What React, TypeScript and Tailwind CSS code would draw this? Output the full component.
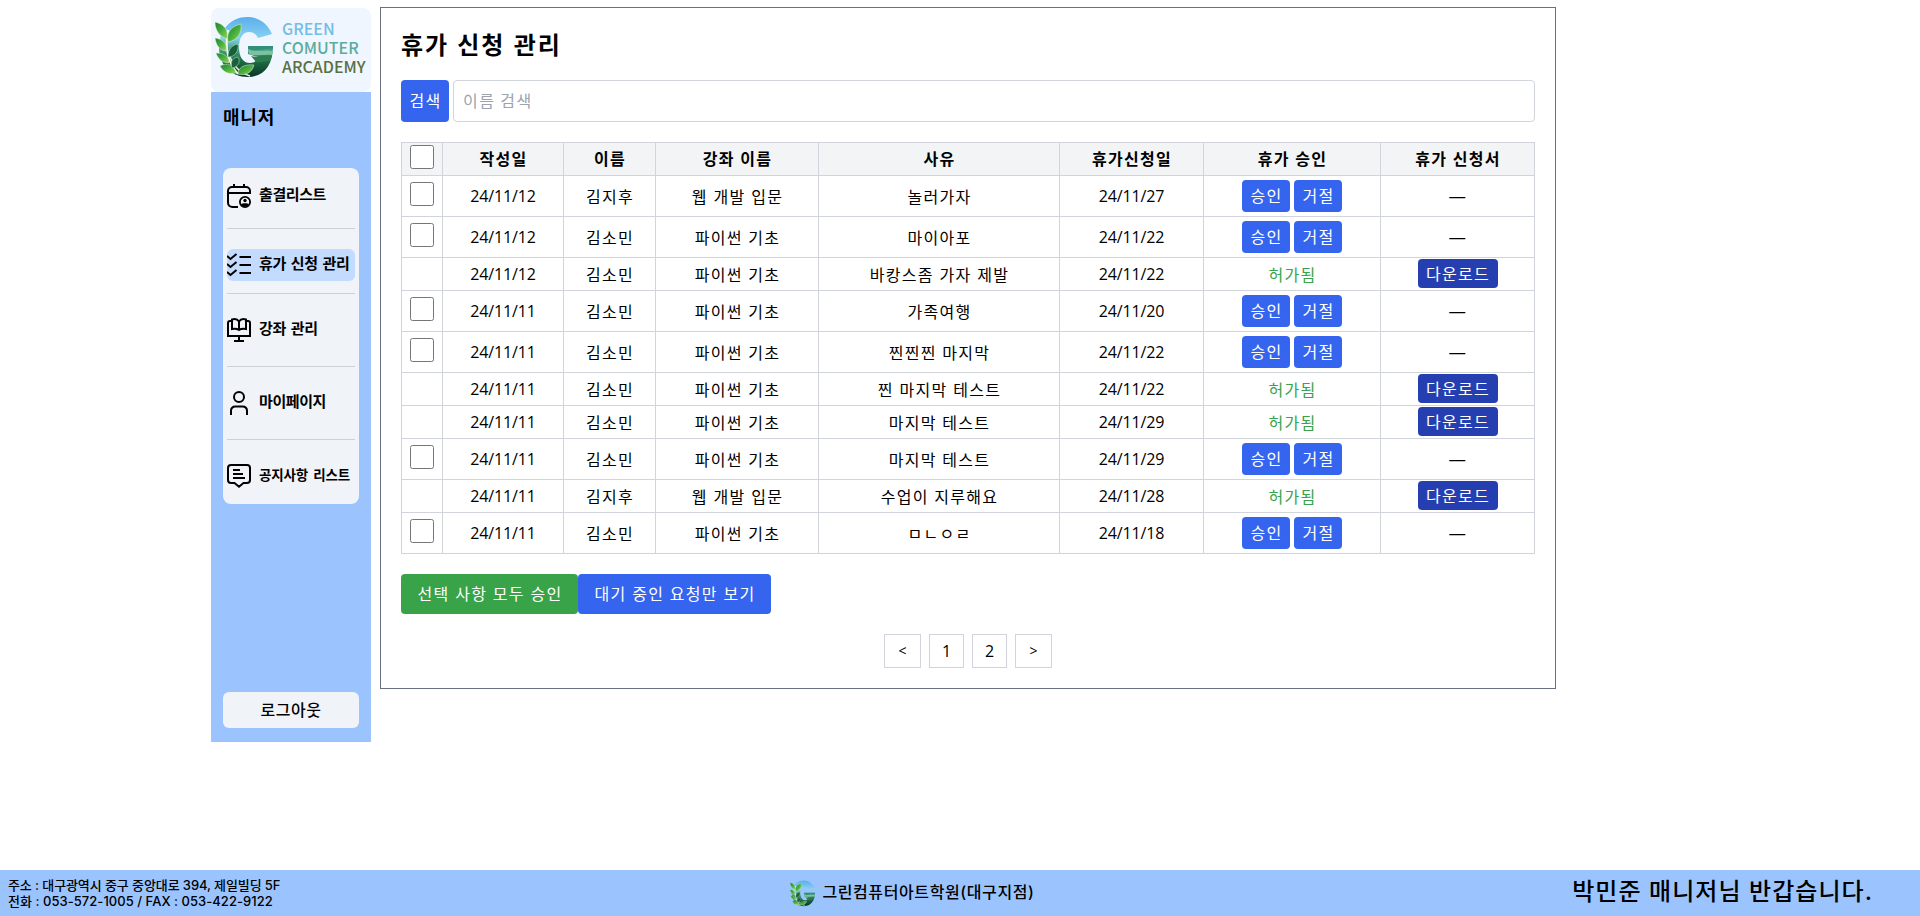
import React from "react";

type Leave = {
  created: string;
  name: string;
  course: string;
  reason: string;
  date: string;
  approved: boolean;
};

const leaves: Leave[] = [
  { created: "24/11/12", name: "김지후", course: "웹 개발 입문", reason: "놀러가자", date: "24/11/27", approved: false },
  { created: "24/11/12", name: "김소민", course: "파이썬 기초", reason: "마이아포", date: "24/11/22", approved: false },
  { created: "24/11/12", name: "김소민", course: "파이썬 기초", reason: "바캉스좀 가자 제발", date: "24/11/22", approved: true },
  { created: "24/11/11", name: "김소민", course: "파이썬 기초", reason: "가족여행", date: "24/11/20", approved: false },
  { created: "24/11/11", name: "김소민", course: "파이썬 기초", reason: "찐찐찐 마지막", date: "24/11/22", approved: false },
  { created: "24/11/11", name: "김소민", course: "파이썬 기초", reason: "찐 마지막 테스트", date: "24/11/22", approved: true },
  { created: "24/11/11", name: "김소민", course: "파이썬 기초", reason: "마지막 테스트", date: "24/11/29", approved: true },
  { created: "24/11/11", name: "김소민", course: "파이썬 기초", reason: "마지막 테스트", date: "24/11/29", approved: false },
  { created: "24/11/11", name: "김지후", course: "웹 개발 입문", reason: "수업이 지루해요", date: "24/11/28", approved: true },
  { created: "24/11/11", name: "김소민", course: "파이썬 기초", reason: "ㅁㄴㅇㄹ", date: "24/11/18", approved: false },
];

const heads = ["작성일", "이름", "강좌 이름", "사유", "휴가신청일", "휴가 승인", "휴가 신청서"];

function Logo({ className, id }: { className: string; id: string }) {
  return (
    <svg viewBox="0 0 60 63" className={className} aria-hidden="true">
      <defs>
        <linearGradient id={id + "g"} x1="0" y1="0" x2="0" y2="1">
          <stop offset="0" stopColor="#5aaeea" />
          <stop offset="0.35" stopColor="#86d2f2" />
          <stop offset="0.52" stopColor="#4aa48c" />
          <stop offset="0.72" stopColor="#1f7048" />
          <stop offset="1" stopColor="#0b3328" />
        </linearGradient>
        <linearGradient id={id + "l"} x1="0" y1="0" x2="1" y2="1">
          <stop offset="0" stopColor="#1c8434" />
          <stop offset="0.5" stopColor="#46ad3e" />
          <stop offset="1" stopColor="#98d455" />
        </linearGradient>
      </defs>
      <path
        d="M58 18C53 7 44 1 33 1C17 1 5 14 5 31C5 49 17 61 34 61C49 61 59 50 59 30L34 30L34 38L44 41C43 45 40 47 36 47C29 47 25 41 25 31C25 22 29 16 35 16C39 16 42 18 44 22Z"
        fill={"url(#" + id + "g)"}
      />
      <path d="M34 30H59L59 33C50 32 42 36 34 33Z" fill="#2f8f78" />
      <path d="M34 33C42 37 50 33 59 35L58 39C50 38 42 41 35 38Z" fill="#7cc2a2" />
      <path d="M37 40C44 42 50 39 58 40L56 45C50 45 46 47 42 46Z" fill="#2f7d4e" />
      <path d="M24 58C13 46 11 30 14 14" fill="none" stroke="#f4faf2" strokeWidth="2" />
      <path d="M36 60C26 57 19 50 15 38C18 36 22 32 24 28" fill="none" stroke="#e6f4dc" strokeWidth="1.400" />
      <g fill={"url(#" + id + "l)"} stroke="#e2f2d6" strokeWidth="0.500">
        <path d="M13 23C5 20 1 14 1 6C10 8 15 14 13 23Z" />
        <path d="M14 26C12 17 17 10 27 8C28 17 24 24 14 26Z" />
        <path d="M12 35C5 34 2 29 1 22C9 23 14 28 12 35Z" />
        <path d="M15 47C8 47 4 43 2 37C10 37 15 40 15 47Z" />
        <path d="M22 57C15 59 9 56 6 50C13 46 20 49 22 57Z" />
        <path d="M24 58C24 51 31 48 40 49C38 57 31 60 24 58Z" />
      </g>
      <g fill="#17613a" stroke="#cfe8c8" strokeWidth="0.500">
        <path d="M14 41C14 33 18 29 24 28C25 35 21 41 14 41Z" />
        <path d="M18 52C16 46 18 42 24 41C27 46 24 51 18 52Z" />
      </g>
    </svg>
  );
}

function Icon({ children }: { children: React.ReactNode }) {
  return (
    <svg viewBox="0 0 24 24" className="h-6 w-6 shrink-0" fill="none" stroke="black" strokeWidth="2" aria-hidden="true">
      {children}
    </svg>
  );
}

const CalendarUser = () => (
  <Icon>
    <path d="M11 23H5.500C3 23 1 21.300 1 18.500V7C1 4.800 2.800 3 5 3H19C21.200 3 23 4.800 23 7V10M1 9H23M7 0V4M17 0V4" />
    <circle cx="18" cy="18" r="5.100" strokeWidth="1.800" />
    <circle cx="18" cy="16.500" r="1.700" fill="black" stroke="none" />
    <path d="M14 20.500C15 18.800 21 18.800 22 20.500C21 23.500 15 23.500 14 20.500Z" fill="black" stroke="none" />
  </Icon>
);

const Checks = () => (
  <Icon>
    <path d="M0 3L3.500 6L9.500 1M0 11L3.500 14L9.500 9M0 19L3.500 22L9.500 17M12.500 4H24M12.500 12H24M12.500 20H24" />
  </Icon>
);

const BookScreen = () => (
  <Icon>
    <path d="M5 3H3C1.800 3 1 3.800 1 5V18H23V5C23 3.800 22.200 3 21 3H19M12 18V23M7 23H17" />
    <path d="M12 3.500C10.500 1.200 7.500 .7 5 1.500V11C8 10.500 10.500 11 12 12C13.500 11 16 10.500 19 11V1.500C16.500 .7 13.500 1.200 12 3.500ZM12 3.500V12" />
  </Icon>
);

const Person = () => (
  <Icon>
    <circle cx="12" cy="6" r="5" />
    <path d="M4 24V20C4 17.300 5.800 15.500 8.500 15.500H15.500C18.200 15.500 20 17.300 20 20V24" />
  </Icon>
);

const Notice = () => (
  <Icon>
    <path d="M4 1H20C21.700 1 23 2.300 23 4V16C23 17.700 21.700 19 20 19H16.500L12 22.700L7.500 19H4C2.300 19 1 17.700 1 16V4C1 2.300 2.300 1 4 1ZM6 6H13M6 10H16M6 14H18" />
  </Icon>
);

function NavItem({ icon, label, className }: { icon: React.ReactNode; label: string; className: string }) {
  return (
    <a className={"flex items-center gap-2 whitespace-nowrap font-bold " + className}>
      {icon}
      <span className="-mt-1">{label}</span>
    </a>
  );
}

function Sidebar() {
  return (
    <aside className="flex h-[734px] w-40 flex-col bg-[#9bc4ff]">
      <div className="bg-white">
        <div className="flex h-[84px] items-start rounded-lg bg-[#eff6ff] pl-[3px] pt-2">
          <Logo id="side" className="h-[63px] w-[60px] shrink-0" />
          <div className="ml-2 mt-[3px] flex flex-col text-base font-medium leading-[19px]">
            <span className="text-[#73bde6]">GREEN</span>
            <span className="text-[#5cab9d]">COMUTER</span>
            <span className="text-[#5a7040]">ARCADEMY</span>
          </div>
        </div>
      </div>
      <h2 className="ml-3 mt-3 h-6 text-lg font-bold leading-6 tracking-[0.8px]">매니저</h2>
      <nav className="mx-3 mt-10 flex h-[336px] flex-col rounded-lg bg-[#f0f4f9] p-1">
        <NavItem icon={<CalendarUser />} label="출결리스트" className="h-14 pb-2 text-[15px] tracking-[-0.4px]" />
        <div className="h-px bg-[#ccd1d9]" />
        <NavItem
          icon={<Checks />}
          label="휴가 신청 관리"
          className="mt-5 h-8 rounded-md bg-[#c2dbfe] text-[15px] tracking-[-0.4px] [word-spacing:2px]"
        />
        <div className="mt-3 h-px bg-[#ccd1d9]" />
        <NavItem icon={<BookScreen />} label="강좌 관리" className="h-[72px] text-[15px] tracking-[-0.4px] [word-spacing:2px]" />
        <div className="h-px bg-[#ccd1d9]" />
        <NavItem icon={<Person />} label="마이페이지" className="h-[72px] text-[15px] tracking-[-0.4px]" />
        <div className="h-px bg-[#ccd1d9]" />
        <NavItem
          icon={<Notice />}
          label="공지사항 리스트"
          className="h-[60px] pt-3 text-[13.500px] tracking-[-0.2px] [word-spacing:2.5px]"
        />
      </nav>
      <button className="mx-3 mb-3.5 mt-auto h-9 rounded-md bg-[#f0f4f9] pb-0.5 text-base font-medium tracking-[0.5px]">
        로그아웃
      </button>
    </aside>
  );
}

function ActionButton({ label, className }: { label: string; className: string }) {
  return <button className={"whitespace-nowrap rounded pb-0.5 text-center indent-[1px] text-white " + className}>{label}</button>;
}

function LeaveTable() {
  return (
    <table className="mt-5 w-[1134px] table-fixed border-collapse text-center indent-[1px] leading-6">
      <colgroup>
        <col className="w-[41px]" />
        <col className="w-[121px]" />
        <col className="w-[92px]" />
        <col className="w-[163px]" />
        <col className="w-[241px]" />
        <col className="w-[144px]" />
        <col className="w-[177px]" />
        <col className="w-[154px]" />
      </colgroup>
      <thead>
        <tr className="h-[33px] bg-[#f2f4f6]">
          <th className="border border-[#d1d5db] p-0">
            <input type="checkbox" className="mx-auto mb-1 block h-6 w-6" />
          </th>
          {heads.map((h) => (
            <th key={h} className="border border-[#d1d5db] px-0 pb-0.5 pt-0 font-bold">
              {h}
            </th>
          ))}
        </tr>
      </thead>
      <tbody className="[&_td]:border [&_td]:border-[#d1d5db] [&_td]:p-0">
        {leaves.map((l, i) => (
          <tr key={i} className={l.approved ? "h-[33px]" : "h-[41px]"}>
            <td>{!l.approved && <input type="checkbox" className="mx-auto mb-1 block h-6 w-6" />}</td>
            <td className="indent-0 font-['Open_Sans'] tracking-[-0.15px]">{l.created}</td>
            <td>{l.name}</td>
            <td>{l.course}</td>
            <td>{l.reason}</td>
            <td className="indent-0 font-['Open_Sans'] tracking-[-0.15px]">{l.date}</td>
            <td>
              {l.approved ? (
                <span className="text-[#38a34a]">허가됨</span>
              ) : (
                <div className="flex justify-center gap-1">
                  <ActionButton label="승인" className="h-8 w-12 bg-[#3564ee]" />
                  <ActionButton label="거절" className="h-8 w-12 bg-[#3564ee]" />
                </div>
              )}
            </td>
            <td>
              {l.approved ? (
                <ActionButton label="다운로드" className="mx-auto -mt-px block h-[29px] w-20 bg-[#263fb0]" />
              ) : (
                <span className="font-['Liberation_Sans']">—</span>
              )}
            </td>
          </tr>
        ))}
      </tbody>
    </table>
  );
}

export default function App() {
  return (
    <div className="flex h-screen flex-col justify-between bg-white font-['Noto_Sans_CJK_KR',sans-serif] text-black">
      <div className="flex items-start gap-[9px] pl-[211px] pt-[7px]">
        <div className="pt-px">
          <Sidebar />
        </div>
        <main className="h-[682px] w-[1176px] border border-[#6b7080] p-5 tracking-[0.08em] [word-spacing:0.05em]">
          <h1 className="text-2xl font-bold leading-8 tracking-[0.08em] [word-spacing:0.04em]">휴가 신청 관리</h1>
          <div className="mt-5 flex gap-1">
            <ActionButton label="검색" className="h-[42px] w-12 bg-[#3564ee]" />
            <input
              placeholder="이름 검색"
              className="h-[42px] flex-1 rounded border border-[#d1d5db] px-[9px] pb-0.5 tracking-[0.09em] placeholder:text-[#9ca3af]"
            />
          </div>
          <LeaveTable />
          <div className="mt-5 flex">
            <ActionButton label="선택 사항 모두 승인" className="h-10 w-[177px] bg-[#38a348] [word-spacing:0.8px]" />
            <ActionButton label="대기 중인 요청만 보기" className="h-10 w-[193px] bg-[#3564ee] [word-spacing:0.8px]" />
          </div>
          <div className="mt-5 flex justify-center gap-2 font-['Open_Sans'] tracking-normal">
            <button className="h-[34px] w-[37px] border border-[#d1d5db] text-sm">&lt;</button>
            <button className="h-[34px] w-[35px] border border-[#d1d5db]">1</button>
            <button className="h-[34px] w-[35px] border border-[#d1d5db]">2</button>
            <button className="h-[34px] w-[37px] border border-[#d1d5db] text-sm">&gt;</button>
          </div>
        </main>
      </div>
      <footer className="grid h-[46px] grid-cols-3 items-center bg-[#9bc4ff] font-['Inter','Noto_Sans_CJK_KR',sans-serif]">
        <address className="pl-2 text-[13px] font-medium not-italic leading-4">
          <p className="tracking-[-0.1px]">주소 : 대구광역시 중구 중앙대로 394, 제일빌딩 5F</p>
          <p className="tracking-[0.04px]">전화 : 053-572-1005 / FAX : 053-422-9122</p>
        </address>
        <div className="flex items-center justify-center gap-1.5 pr-24 text-base font-medium tracking-[0.6px]">
          <Logo id="foot" className="h-[27px] w-[27px]" />
          <span className="-mt-0.5">그린컴퓨터아트학원(대구지점)</span>
        </div>
        <p className="-mt-0.5 pr-[47px] text-right text-2xl font-medium leading-8 tracking-[1.05px]">박민준 매니저님 반갑습니다.</p>
      </footer>
    </div>
  );
}
